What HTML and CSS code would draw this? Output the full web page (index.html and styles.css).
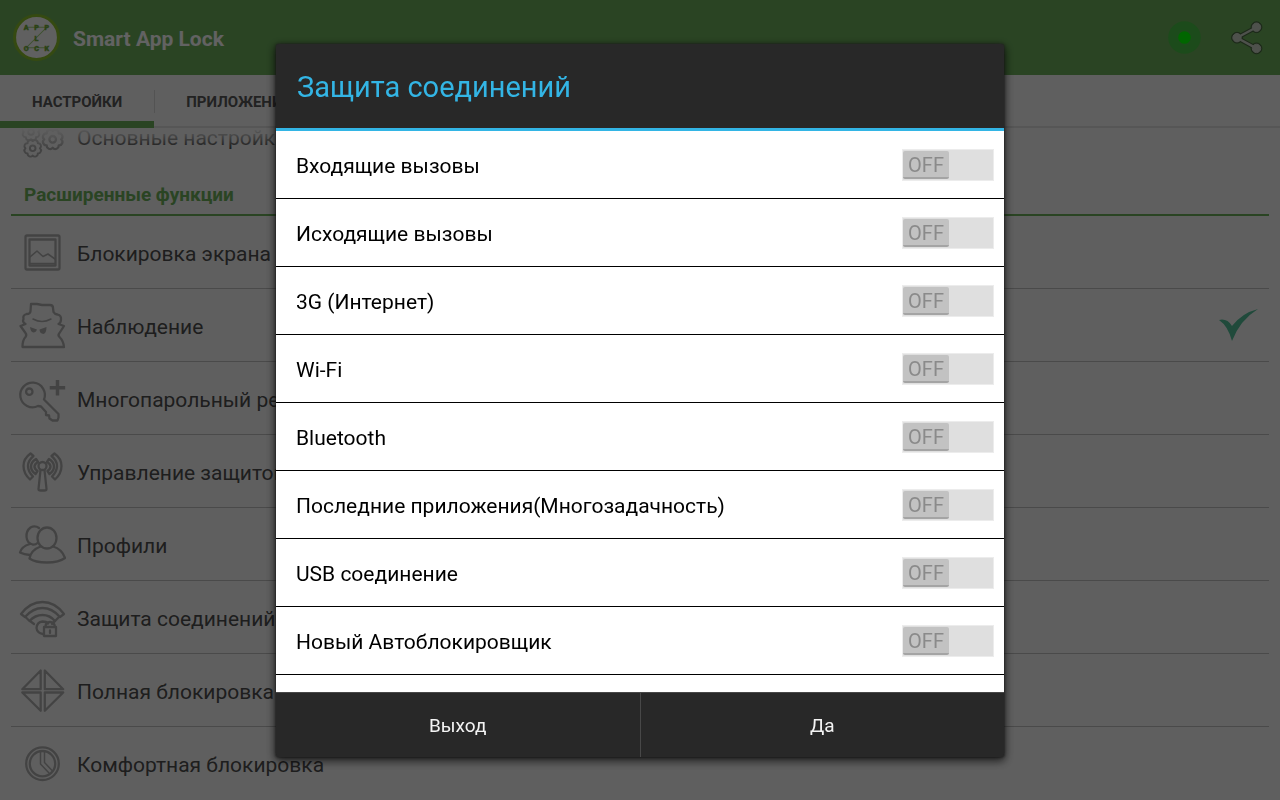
FILE: index.html
```html
<!DOCTYPE html>
<html lang="ru">
<head>
<meta charset="utf-8">
<title>Smart App Lock</title>
<link rel="stylesheet" href="styles.css">
</head>
<body>
<div class="app">
  <header class="topbar">
    <svg class="logo" viewBox="0 0 48 48" aria-hidden="true">
      <circle cx="24" cy="24" r="21.5" class="logo-disc"/>
      <path d="M14 14H34L14 34H34" class="logo-line"/>
      <g class="logo-text">
        <text x="14" y="17">A</text><text x="24" y="17">P</text><text x="34" y="17">P</text>
        <text x="24" y="27">L</text>
        <text x="14" y="37">O</text><text x="24" y="37">C</text><text x="34" y="37">K</text>
      </g>
    </svg>
    <h1 class="app-title">Smart App Lock</h1>
    <button class="icon-button" type="button" aria-label="Статус">
      <svg width="34" height="34" viewBox="0 0 34 34"><circle cx="16.5" cy="16.5" r="16.3" fill="#48bb44"/><circle cx="16.5" cy="16.5" r="6.3" fill="#00ff00"/></svg>
    </button>
    <button class="icon-button share" type="button" aria-label="Поделиться">
      <svg width="34" height="36" viewBox="0 0 34 36">
        <g fill="#486640" stroke="#486640"><path d="M26.500 7.200L7 17.700l19.500 10.700" fill="none" stroke-width="4.600"/><circle cx="7" cy="17.700" r="5.400"/><circle cx="26.500" cy="7.200" r="5.400"/><circle cx="26.500" cy="28.400" r="5.400"/></g>
        <g fill="#c2cbbd" stroke="#c2cbbd"><path d="M26.500 7.200L7 17.700l19.500 10.700" fill="none" stroke-width="2.400"/><circle cx="7" cy="17.700" r="4.200"/><circle cx="26.500" cy="7.200" r="4.200"/><circle cx="26.500" cy="28.400" r="4.200"/></g>
      </svg>
    </button>
  </header>
  <nav class="tabs">
    <a class="tab active" href="#settings">НАСТРОЙКИ</a>
    <a class="tab" href="#apps">ПРИЛОЖЕНИЯ</a>
  </nav>
  <main class="settings">
    <div class="scrolled">
      <a class="row" href="#main">
        <svg class="icon" viewBox="0 0 48 48">
          <defs><g id="gear"><path d="M8.500 0A3.400 3.400 0 0 1 6 6A3.400 3.400 0 0 1 0 8.500A3.400 3.400 0 0 1-6 6A3.400 3.400 0 0 1-8.500 0A3.400 3.400 0 0 1-6-6A3.400 3.400 0 0 1 0-8.500A3.400 3.400 0 0 1 6-6A3.400 3.400 0 0 1 8.500 0Z"/><circle r="3.300"/></g></defs>
          <use href="#gear" transform="translate(34.700 27.300)"/>
          <use href="#gear" transform="translate(14.700 36.300) scale(.85)"/>
          <use href="#gear" transform="translate(13 20) scale(.85)"/>
        </svg>
        <span>Основные настройки</span>
      </a>
      <h2 class="section">Расширенные функции</h2>
      <a class="row" href="#screen">
        <svg class="icon" viewBox="0 0 48 48"><rect x="7.500" y="7.500" width="34" height="34" rx="1.500"/><rect x="11.500" y="11.500" width="26" height="26"/><path d="M12 29l7-6 6 5.500 5-2.500 7 5M12 35.500h25" stroke-width="1.600"/></svg>
        <span>Блокировка экрана</span>
      </a>
      <a class="row" href="#watch">
        <svg class="icon" viewBox="0 0 48 48"><path d="M13 3h6l5 1h8q3 0 3 3l.5 4q1 2 4 2.500 4 1 3.500 5 0 3-2.500 4.500l5.500 2-4.500 7q-2 2 0 4 4 4 4.500 10H4.500q0-7 3-10 1.500-2 0-4l-5-7 5-2Q4 21 5.500 18q-1-4 3-5 4 0 4-3z"/><path d="M15 18q9 5 18 0" stroke-width="1.500"/><path class="solid" d="M12 26l7 2.500q-1 3-3.500 3-3-.5-3.500-5.500zM28.500 26l-7 2.500q0 4 4 4.500 3-1 3-7z"/></svg>
        <span>Наблюдение</span>
        <svg class="check" viewBox="0 0 42 34"><path d="M1 12q8-2 13 6Q24 5 40 1 22 12 14 33 10 18 1 12Z"/></svg>
      </a>
      <a class="row" href="#multi">
        <svg class="icon" viewBox="0 0 48 48"><path d="M26 25.500A12.300 12.300 0 1 0 20 32l3 .5 5 5.500v3l3 .5.500 3 3 2h5l1-3v-3.500z"/><circle cx="11.300" cy="17.700" r="3.200"/><path stroke-linecap="butt" d="M39.500 6v15.500M31.700 13.700h15.500" stroke-width="3.500"/></svg>
        <span>Многопарольный режим</span>
      </a>
      <a class="row" href="#guard">
        <svg class="icon" viewBox="0 0 48 48"><circle cx="24.500" cy="19" r="4"/><path d="M22.500 23l-2 19q0 1.500 2 1.500h4q2 0 2-1.500l-2-19"/><g id="waves"><path d="M12.500 6.500q-7 5-7 12.500t6.500 13.500l3-3q-5-5-5-10.500t5.500-10z"/><path d="M18 12q-5 3-5 7.500t4.500 7.500l2-3q-3-2-3-4.500t3.500-4.500z" stroke-width="2.400"/></g><use href="#waves" transform="matrix(-1 0 0 1 49 0)"/></svg>
        <span>Управление защитой</span>
      </a>
      <a class="row" href="#profiles">
        <svg class="icon" viewBox="0 0 48 48"><ellipse cx="29" cy="18" rx="9.500" ry="10.500"/><path d="M22.500 26.500Q13 30 11.500 38.500 17 42.500 29 42.500t18-4.500Q44 29 35 26.500"/><path d="M21 8Q17 5 12.500 7.500 8 11 8.500 17t6 7.500q3 .5 5-1.500"/><path d="M12 24Q3.500 26.500 2 32.500q4 2 10 2.500"/></svg>
        <span>Профили</span>
      </a>
      <a class="row" href="#connections">
        <svg class="icon" viewBox="0 0 48 48"><path d="M3 21Q12 9 24.500 9T46 21l-4 3Q34 15 24.500 15T7 24z"/><path d="M7.500 24l4 4Q17 22 24.500 22T37 28l4-4"/><path d="M12 28l4 3M37 28l-3 3M25 41q-6-1-6.500-6 .5-6 6-6.500 4 0 5.500 2"/><path d="M26 34h12v9H26zM27.500 34q0-5 4.500-5t5 5M32 37.500v2.500"/></svg>
        <span>Защита соединений</span>
      </a>
      <a class="row" href="#full">
        <svg class="icon" viewBox="0 0 48 48"><path d="M22.700 4.500v18.700H4.300zM26.800 4.500v18.700H45.200zM22.700 44.800V26.500H4.300zM26.800 44.800V26.500H45.200z"/></svg>
        <span>Полная блокировка</span>
      </a>
      <a class="row" href="#comfort">
        <svg class="icon" viewBox="0 0 48 48"><circle cx="24.500" cy="24.700" r="16.300"/><circle cx="24.500" cy="24.700" r="12.700"/><path d="M22.500 12.500v12.500l8.500 9M26.500 12.500v11l8 8.500" stroke-width="1.500"/></svg>
        <span>Комфортная блокировка</span>
      </a>
    </div>
  </main>
</div>

<div class="overlay">
  <section class="dialog" role="dialog" aria-modal="true" aria-labelledby="dialog-title">
    <h2 class="dialog-title" id="dialog-title">Защита соединений</h2>
    <ul class="options">
      <li><label class="option"><span class="name">Входящие вызовы</span><span class="switch"><input type="checkbox"><span class="thumb">OFF</span></span></label></li>
      <li><label class="option"><span class="name">Исходящие вызовы</span><span class="switch"><input type="checkbox"><span class="thumb">OFF</span></span></label></li>
      <li><label class="option"><span class="name">3G (Интернет)</span><span class="switch"><input type="checkbox"><span class="thumb">OFF</span></span></label></li>
      <li><label class="option"><span class="name">Wi-Fi</span><span class="switch"><input type="checkbox"><span class="thumb">OFF</span></span></label></li>
      <li><label class="option"><span class="name">Bluetooth</span><span class="switch"><input type="checkbox"><span class="thumb">OFF</span></span></label></li>
      <li><label class="option"><span class="name">Последние приложения(Многозадачность)</span><span class="switch"><input type="checkbox"><span class="thumb">OFF</span></span></label></li>
      <li><label class="option"><span class="name">USB соединение</span><span class="switch"><input type="checkbox"><span class="thumb">OFF</span></span></label></li>
      <li><label class="option"><span class="name">Новый Автоблокировщик</span><span class="switch"><input type="checkbox"><span class="thumb">OFF</span></span></label></li>
    </ul>
    <div class="actions">
      <button type="button">Выход</button>
      <button type="button">Да</button>
    </div>
  </section>
</div>
</body>
</html>
```
FILE: styles.css
```css
* { box-sizing: border-box; }
body {
  margin: 0;
  background: #eee;
  color: #4c4c4c;
  font-family: Roboto, "Noto Sans", sans-serif;
}
a { color: inherit; text-decoration: none; }
button { font: inherit; border: 0; padding: 0; background: none; cursor: pointer; }

.app { display: flex; flex-direction: column; height: 100vh; overflow: hidden; }

.topbar {
  display: flex;
  align-items: center;
  flex: none;
  height: 75px;
  padding: 0 16px 0 12px;
  background: #69aa58;
}
.logo { width: 49px; height: 49px; }
.logo-disc { fill: #f0f0f0; stroke: #86b82c; stroke-width: 3; }
.logo-line { fill: none; stroke: #9cc878; stroke-width: 1; }
.logo-text { fill: #6ba636; stroke: #6ba636; stroke-width: .4px; font-size: 7px; font-weight: 900; text-anchor: middle; }
.app-title { flex: 1; margin: 0 0 0 12px; color: #f4f4f4; font-size: 21px; font-weight: 700; line-height: 28px; padding-top: 2px; }
.icon-button { display: flex; }
.share { margin-left: 28px; }

.tabs { display: flex; flex: none; height: 53px; border-bottom: 2px solid #d6d6d6; }
.tab {
  display: flex;
  align-items: center;
  position: relative;
  padding: 2px 32px 0;
  font-size: 15px;
  font-weight: 700;
  color: #555;
}
.tab + .tab::before {
  content: "";
  position: absolute;
  left: 0;
  top: 15px;
  bottom: 13px;
  width: 1px;
  background: #d0d0d0;
}
.tab.active::after {
  content: "";
  position: absolute;
  left: 0;
  right: 0;
  bottom: -2px;
  height: 7px;
  background: #69aa58;
}

.settings { position: relative; flex: 1; min-height: 0; overflow: hidden; padding: 0 11px; }
.settings::before {
  content: "";
  position: absolute;
  inset: 0 0 auto;
  height: 20px;
  background: linear-gradient(#eee, transparent);
}
/* list scrolled a little past its first row */
.scrolled { margin-top: -28px; }
.row {
  display: flex;
  align-items: center;
  gap: 11px;
  height: 73px;
  padding: 0 9px 0 7px;
  border-bottom: 1px solid #b8b8b8;
  font-size: 21px;
  line-height: 28px;
}
.row:first-child { height: 72px; border-bottom: 0; }
.row:last-child { border-bottom-color: transparent; }
.row span { flex: 1; padding-top: 4px; }
.icon { flex: none; width: 48px; height: 48px; fill: none; stroke: #a8a8a8; stroke-width: 2.3; stroke-linejoin: round; stroke-linecap: round; }
.icon .solid { fill: #a8a8a8; stroke: none; }
.check { width: 42px; height: 34px; fill: #50b894; }
.section {
  display: flex;
  align-items: center;
  height: 44px;
  margin: 0;
  padding: 2px 13px 0;
  border-bottom: 2px solid #69aa58;
  color: #69aa58;
  font-size: 19px;
  font-weight: 700;
}

.overlay {
  position: fixed;
  inset: 0;
  display: flex;
  justify-content: center;
  padding: 44px 24px 43px;
  background: rgba(0, 0, 0, .6);
}
.dialog {
  display: flex;
  flex-direction: column;
  width: 100%;
  max-width: 728px;
  overflow: hidden;
  border-radius: 3px;
  background: #282828;
  box-shadow: 0 3px 10px 1px rgba(0, 0, 0, .7), 0 0 2px 1px rgba(40, 40, 40, .6);
}
.dialog-title {
  flex: none;
  margin: 0;
  padding: 25px 21px 23px;
  border-bottom: 3px solid #33b5e5;
  color: #33b5e5;
  font-size: 29px;
  font-weight: 400;
  line-height: 36px;
}
.options { flex: 1; min-height: 0; margin: 0; padding: 0; overflow: hidden; list-style: none; background: #fff; }
.option {
  display: flex;
  align-items: center;
  justify-content: space-between;
  height: 68px;
  padding: 0 10px 0 20px;
  border-bottom: 1px solid #000;
  color: #000;
  font-size: 21px;
  line-height: 28px;
}
.name { padding-top: 3px; }
.switch { position: relative; display: flex; }
.switch input {
  appearance: none;
  width: 92px;
  height: 32px;
  margin: 0;
  border: 1px solid #ececec;
  background: #dfdfdf;
}
.thumb {
  position: absolute;
  left: 1px;
  top: 2px;
  width: 46px;
  height: 28px;
  border-radius: 2px;
  border-bottom: 2px solid #a4a4a4;
  background: #c2c2c2;
  color: #8a8a8a;
  font-size: 20px;
  line-height: 29px;
  text-align: center;
}
.actions { display: flex; flex: none; height: 65px; border-top: 1px solid #484848; }
.actions button { flex: 1; color: #f3f3f3; font-size: 19px; }
.actions button:first-child { border-right: 1px solid #484848; }
```
